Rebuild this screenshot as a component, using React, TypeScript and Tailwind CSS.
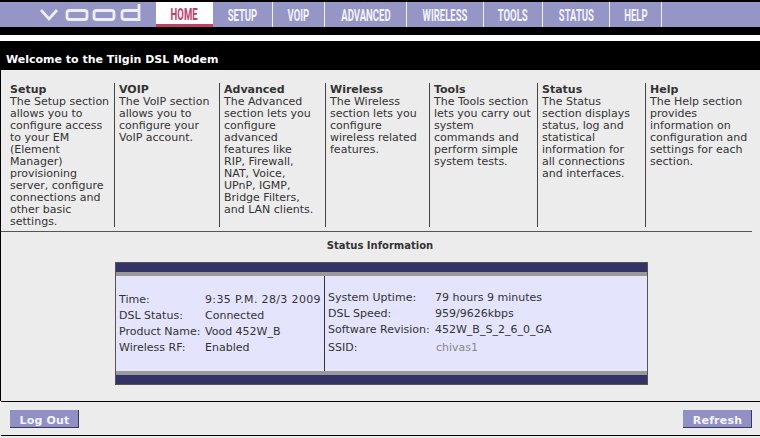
const tabs = [
  { label: 'HOME', width: 'w-[57px]', active: true },
  { label: 'SETUP', width: 'w-[60px]' },
  { label: 'VOIP', width: 'w-[52px]' },
  { label: 'ADVANCED', width: 'w-[82px]' },
  { label: 'WIRELESS', width: 'w-[77px]' },
  { label: 'TOOLS', width: 'w-[59px]' },
  { label: 'STATUS', width: 'w-[67px]' },
  { label: 'HELP', width: 'w-[52px]' },
]

const sections = [
  { title: 'Setup', width: 'w-[114px]', pad: 'pl-[9px]', text: ['The Setup section', 'allows you to', 'configure access', 'to your EM', '(Element', 'Manager)', 'provisioning', 'server, configure', 'connections and', 'other basic', 'settings.'] },
  { title: 'VOIP', width: 'w-[105px]', pad: 'pl-[4px]', text: ['The VoIP section', 'allows you to', 'configure your', 'VoIP account.'] },
  { title: 'Advanced', width: 'w-[106px]', pad: 'pl-[4px]', text: ['The Advanced', 'section lets you', 'configure', 'advanced', 'features like', 'RIP, Firewall,', 'NAT, Voice,', 'UPnP, IGMP,', 'Bridge Filters,', 'and LAN clients.'] },
  { title: 'Wireless', width: 'w-[104px]', pad: 'pl-[4px]', text: ['The Wireless', 'section lets you', 'configure', 'wireless related', 'features.'] },
  { title: 'Tools', width: 'w-[108px]', pad: 'pl-[4px]', text: ['The Tools section', 'lets you carry out', 'system', 'commands and', 'perform simple', 'system tests.'] },
  { title: 'Status', width: 'w-[108px]', pad: 'pl-[4px]', text: ['The Status', 'section displays', 'status, log and', 'statistical', 'information for', 'all connections', 'and interfaces.'] },
  { title: 'Help', width: 'w-[107px]', pad: 'pl-[4px]', text: ['The Help section', 'provides', 'information on', 'configuration and', 'settings for each', 'section.'] },
]

const leftRows = [
  ['Time:', '9:35 P.M. 28/3 2009'],
  ['DSL Status:', 'Connected'],
  ['Product Name:', 'Vood 452W_B'],
  ['Wireless RF:', 'Enabled'],
]

const rightRows = [
  ['System Uptime:', '79 hours 9 minutes'],
  ['DSL Speed:', '959/9626kbps'],
  ['Software Revision:', '452W_B_S_2_6_0_GA'],
]

function Logo() {
  return (
    <svg width="102" height="18" viewBox="0 0 102 18" fill="none" stroke="#eeeef8" strokeWidth="2.8">
      <path d="M1 6 L9 15 L17 6" />
      <rect x="27" y="6.5" width="20" height="9" rx="2.5" />
      <rect x="54" y="6.5" width="20" height="9" rx="2.5" />
      <path d="M99 0 V15.5 H85 Q82 15.5 82 13 V9 Q82 6.5 85 6.5 H99" />
    </svg>
  )
}

function Button({ label }: { label: string }) {
  return (
    <button className="w-[69px] h-[18px] pt-[5px] pl-[1px] bg-[#9090c4] border-b border-r border-[#3a3a60] text-[#f4f4fc] text-[11px] font-bold leading-[12px] tracking-[0.2px]">
      {label}
    </button>
  )
}

export default function App() {
  return (
    <div className="w-[760px] h-[438px] bg-[#ececec] font-['DejaVu_Sans',sans-serif] text-[11px] leading-[12px] text-[#333] overflow-hidden">
      <div className="bg-black pt-[2px] h-[35px]">
        <div className="flex h-[25px] bg-[#9696c6]">
          <div className="w-[156px] pl-[40px] pt-[2px]">
            <Logo />
          </div>
          {tabs.map(t => (
            <div
              key={t.label}
              className={
                t.active
                  ? `${t.width} flex items-center justify-center bg-white border-b-[3px] border-[#c0406a] text-[#c0406a] pt-[2px]`
                  : `${t.width} flex items-center justify-center border-r border-[#f0f0f8] text-[#f4f4fc] pt-[1px]`
              }
            >
              <span className="font-['Roboto',sans-serif] font-bold text-[17px] leading-[20px] scale-x-[0.56] whitespace-nowrap">{t.label}</span>
            </div>
          ))}
        </div>
      </div>
      <div className="h-[6px] bg-white" />
      <div className="h-[29px] bg-black flex items-center pl-[6px] pt-[8px] text-white font-bold text-[11px]">
        Welcome to the Tilgin DSL Modem
      </div>

      <div className="h-[331px] border-l border-black">
        <div className="flex pt-[13px] h-[161px]">
          {sections.map((s, i) => (
            <div
              key={s.title}
              className={`${s.width} ${s.pad} ${i < 6 ? 'border-r border-[#444]' : ''} h-[144px] pt-[1px] whitespace-nowrap`}
            >
              <div className="font-bold">{s.title}</div>
              {s.text.map(line => (
                <div key={line}>{line}</div>
              ))}
            </div>
          ))}
        </div>
        <div className="w-[751px] border-t border-[#555]" />
        <div className="w-[760px] pt-[8px] text-center font-bold text-[10px] leading-[12px] pr-[2px]">Status Information</div>

        <div className="ml-[114px] mt-[10px] w-[533px] h-[123px] border border-[#555] flex flex-col">
          <div className="h-[9px] bg-[#333366]" />
          <div className="h-[4px] bg-[#999]" />
          <div className="flex-1 flex bg-[#e4e4fc]">
            <div className="w-[209px] border-r border-[#333] pl-[3px] pt-[18px] flex flex-col gap-[4px]">
              {leftRows.map(([k, v]) => (
                <div key={k} className="flex whitespace-nowrap">
                  <span className="w-[86px]">{k}</span>
                  <span className={k === 'Time:' ? 'tracking-[0.35px]' : ''}>{v}</span>
                </div>
              ))}
            </div>
            <div className="flex-1 pl-[3px] pt-[16px] flex flex-col gap-[4px]">
              {rightRows.map(([k, v]) => (
                <div key={k} className="flex whitespace-nowrap">
                  <span className="w-[107px]">{k}</span>
                  <span>{v}</span>
                </div>
              ))}
              <div className="flex whitespace-nowrap mt-[2px]">
                <span className="w-[108px]">SSID:</span>
                <span className="text-[#888]">chivas1</span>
              </div>
            </div>
          </div>
          <div className="h-[4px] bg-[#999]" />
          <div className="h-[9px] bg-[#333366]" />
        </div>

        <div className="mt-[16px] border-t border-black h-[34px] flex items-start justify-between pt-[8px] pl-[9px] pr-[8px]">
          <Button label="Log Out" />
          <Button label="Refresh" />
        </div>
        <div className="border-t border-black" />
      </div>
    </div>
  )
}
